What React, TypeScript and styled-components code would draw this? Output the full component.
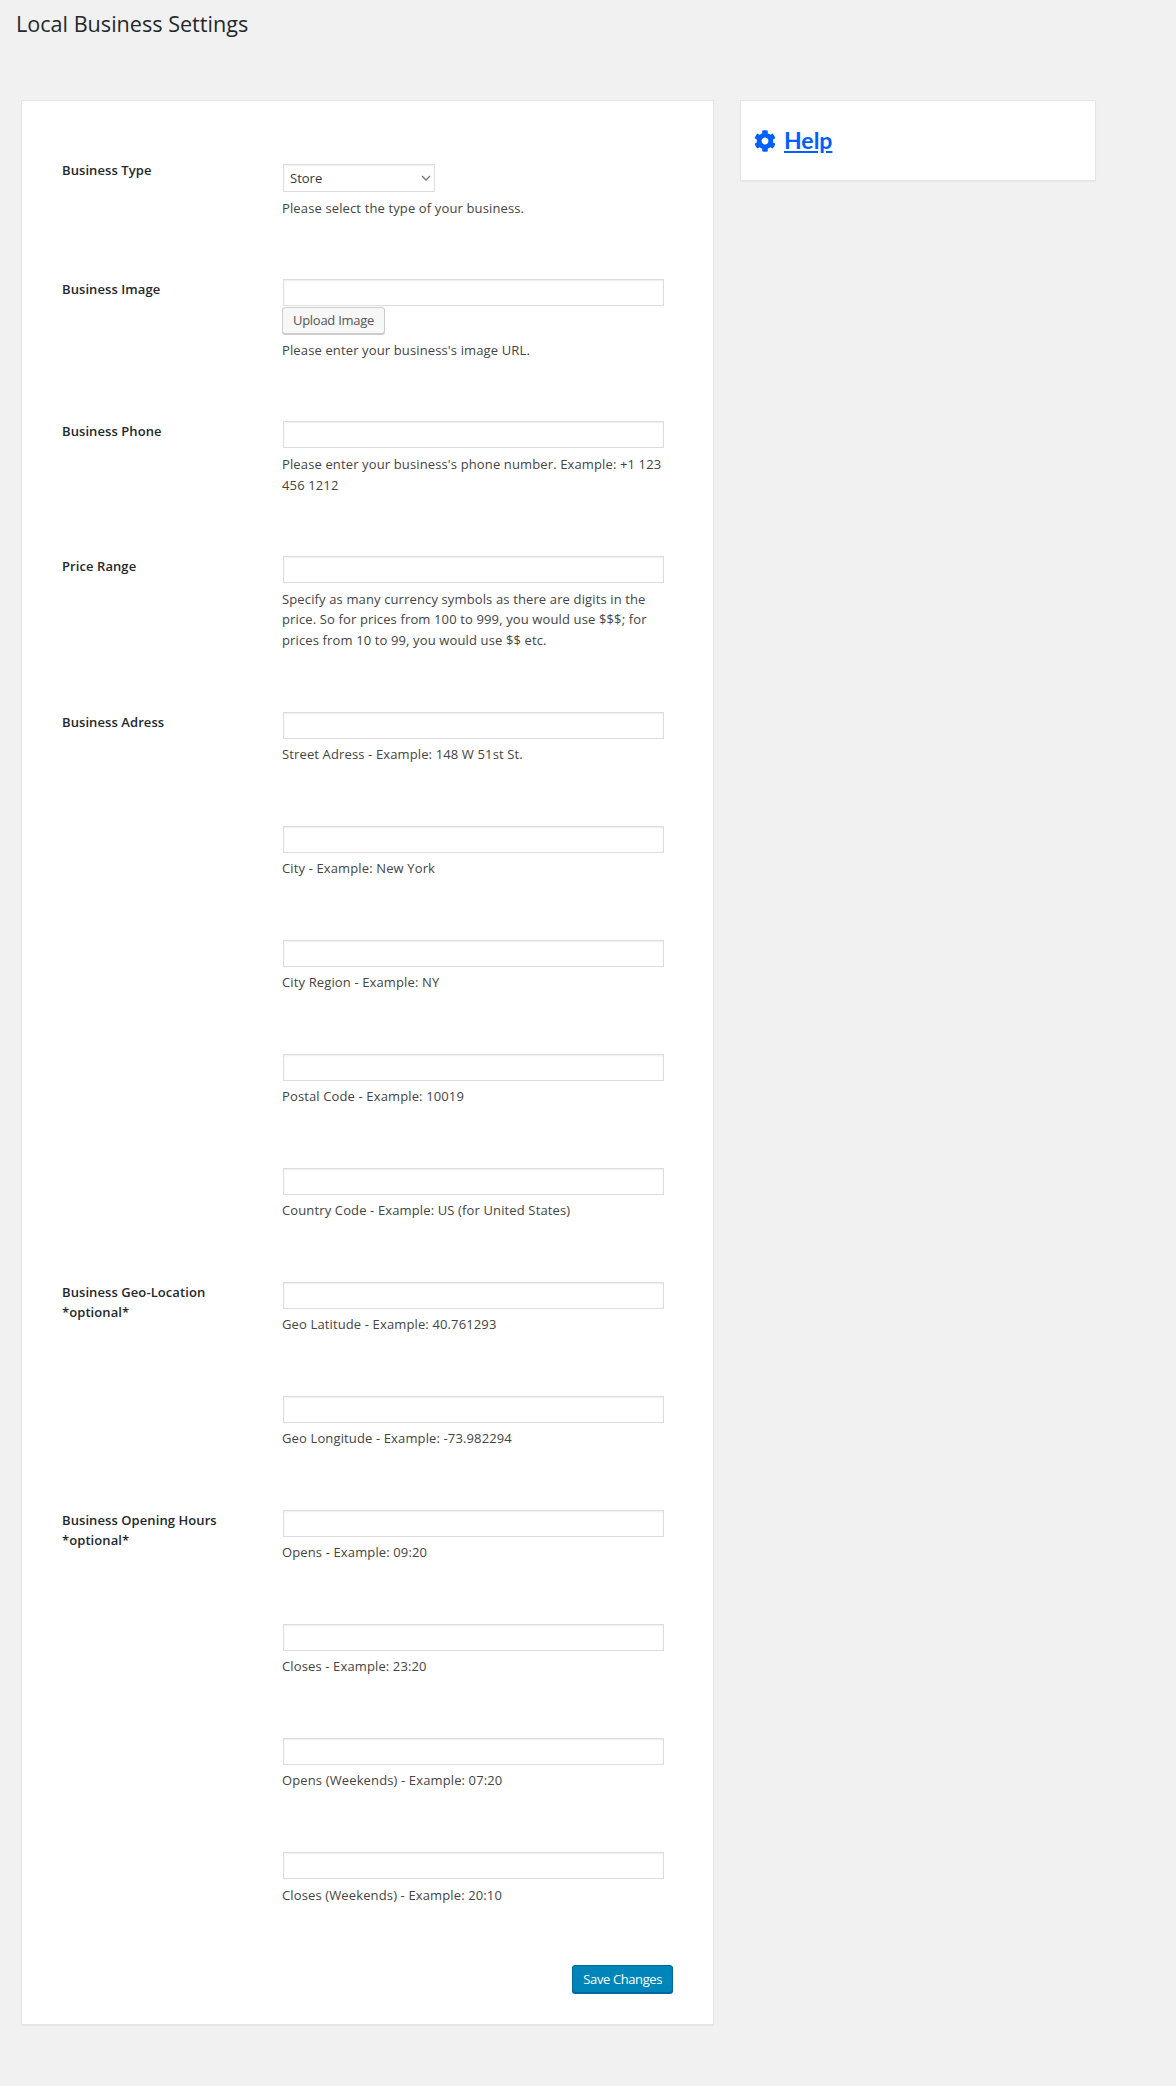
import React, { FC } from 'react';
import styled, { createGlobalStyle } from 'styled-components';
import { FaCog } from 'react-icons/fa';

type FieldData = { hint: string };
type SectionData = { label: string[]; fields: FieldData[] };

const sections: SectionData[] = [
  { label: ['Business Phone'], fields: [{ hint: "Please enter your business's phone number. Example: +1 123 456 1212" }] },
  {
    label: ['Price Range'],
    fields: [
      {
        hint: 'Specify as many currency symbols as there are digits in the price. So for prices from 100 to 999, you would use $$$; for prices from 10 to 99, you would use $$ etc.',
      },
    ],
  },
  {
    label: ['Business Adress'],
    fields: [
      { hint: 'Street Adress - Example: 148 W 51st St.' },
      { hint: 'City - Example: New York' },
      { hint: 'City Region - Example: NY' },
      { hint: 'Postal Code - Example: 10019' },
      { hint: 'Country Code - Example: US (for United States)' },
    ],
  },
  {
    label: ['Business Geo-Location', '*optional*'],
    fields: [{ hint: 'Geo Latitude - Example: 40.761293' }, { hint: 'Geo Longitude - Example: -73.982294' }],
  },
  {
    label: ['Business Opening Hours', '*optional*'],
    fields: [
      { hint: 'Opens - Example: 09:20' },
      { hint: 'Closes - Example: 23:20' },
      { hint: 'Opens (Weekends) - Example: 07:20' },
      { hint: 'Closes (Weekends) - Example: 20:10' },
    ],
  },
];

const App: FC = () => (
  <>
    <GlobalStyle />
    <Page>
      <Title>Local Business Settings</Title>
      <Columns>
        <MainCard>
          <Row>
            <Label $raised>Business Type</Label>
            <Fields>
              <Field>
                <SelectBox defaultValue="Store">
                  <option>Store</option>
                </SelectBox>
                <Hint>Please select the type of your business.</Hint>
              </Field>
            </Fields>
          </Row>
          <Row>
            <Label>Business Image</Label>
            <Fields>
              <Field>
                <TextInput type="text" />
                <UploadButton type="button">Upload Image</UploadButton>
                <Hint>Please enter your business's image URL.</Hint>
              </Field>
            </Fields>
          </Row>
          {sections.map((section) => (
            <Row key={section.label[0]}>
              <Label>
                {section.label.map((line) => (
                  <span key={line}>{line}</span>
                ))}
              </Label>
              <Fields>
                {section.fields.map((field) => (
                  <Field key={field.hint}>
                    <TextInput type="text" />
                    <Hint>{field.hint}</Hint>
                  </Field>
                ))}
              </Fields>
            </Row>
          ))}
          <Actions>
            <SaveButton type="button">Save Changes</SaveButton>
          </Actions>
        </MainCard>
        <HelpCard>
          <HelpIcon />
          <HelpLink href="#help">Help</HelpLink>
        </HelpCard>
      </Columns>
    </Page>
  </>
);

export default App;

const GlobalStyle = createGlobalStyle`
  html, body {
    margin: 0;
    padding: 0;
    background: #f1f1f1;
  }

  body {
    font-family: 'Open Sans', 'Noto Sans', sans-serif;
    font-size: 13px;
    color: #444;
  }
`;

const Page = styled.div`
  height: 2086px;
  overflow: hidden;
  padding: 9px 0 0 16px;
  box-sizing: border-box;
`;

const Title = styled.h1`
  margin: 0;
  font-family: 'Open Sans', sans-serif;
  font-size: 21.6px;
  font-weight: 400;
  line-height: 29px;
  color: #23282d;
`;

const Columns = styled.div`
  display: flex;
  align-items: flex-start;
  gap: 26px;
  margin: 62px 0 0 5px;
`;

const Card = styled.div`
  box-sizing: border-box;
  background: #fff;
  border: 1px solid #e5e5e5;
  box-shadow: 0 1px 1px rgba(0, 0, 0, 0.04);
`;

const MainCard = styled(Card)`
  width: 693px;
  height: 1925px;
  padding: 63px 40px 0 40px;
`;

const HelpCard = styled(Card)`
  display: flex;
  align-items: center;
  gap: 8px;
  width: 356px;
  height: 81px;
  padding: 0 0 0 13px;
`;

const HelpIcon = styled(FaCog)`
  width: 22px;
  height: 22px;
  color: #0060ff;
`;

const HelpLink = styled.a`
  margin-top: -2px;
  font-family: Lato, sans-serif;
  font-size: 23px;
  font-weight: 700;
  color: #0060ff;
  text-decoration: underline;
`;

const Row = styled.div`
  display: grid;
  grid-template-columns: 221px 381px;
`;

const Label = styled.div<{ $raised?: boolean }>`
  display: flex;
  flex-direction: column;
  margin-top: ${(props) => (props.$raised ? '-4px' : '0')};
  font-size: 13px;
  font-weight: 600;
  line-height: 20px;
  letter-spacing: 0.08px;
  color: #23282d;
`;

const Fields = styled.div`
  display: flex;
  flex-direction: column;
`;

const Field = styled.div`
  display: flex;
  flex-direction: column;
  align-items: flex-start;
  padding-bottom: 60.55px;
`;

const TextInput = styled.input`
  box-sizing: border-box;
  width: 381px;
  height: 27px;
  margin: 0;
  padding: 2px 6px;
  background: #fff;
  border: 1px solid #ddd;
  border-radius: 0;
  box-shadow: inset 0 1px 2px rgba(0, 0, 0, 0.07);
  outline: none;
`;

const SelectBox = styled.select`
  box-sizing: border-box;
  width: 152px;
  height: 28px;
  margin: 0;
  padding: 2px 20px 2px 6px;
  appearance: none;
  background: #fff
    url("data:image/svg+xml,%3Csvg xmlns='http://www.w3.org/2000/svg' width='10' height='6'%3E%3Cpath d='M1 1l4 4 4-4' fill='none' stroke='%23777' stroke-width='1.4'/%3E%3C/svg%3E")
    no-repeat right 3px center;
  border: 1px solid #ddd;
  border-radius: 0;
  box-shadow: inset 0 1px 2px rgba(0, 0, 0, 0.07);
  font: inherit;
  font-size: 13px;
  color: #32373c;
`;

const UploadButton = styled.button`
  box-sizing: border-box;
  height: 27px;
  margin: 1px 0 0 -1px;
  padding: 0 10px 1px;
  background: #f7f7f7;
  border: 1px solid #ccc;
  border-radius: 3px;
  box-shadow: 0 1px 0 #ccc;
  font: inherit;
  line-height: 25px;
  letter-spacing: -0.28px;
  color: #555;
`;

const Hint = styled.p`
  margin: 5.7px 0 0 -1px;
  width: 382px;
  line-height: 20.8px;
  letter-spacing: 0.13px;
  color: #444;
`;

const Actions = styled.div`
  display: flex;
  justify-content: flex-end;
  margin-top: -1px;
`;

const SaveButton = styled.button`
  box-sizing: border-box;
  height: 28px;
  padding: 0 10px 1px;
  background: #0085ba;
  border: 1px solid #006799;
  border-radius: 3px;
  box-shadow: 0 1px 0 #006799;
  font: inherit;
  line-height: 26px;
  letter-spacing: -0.4px;
  color: #fff;
`;
